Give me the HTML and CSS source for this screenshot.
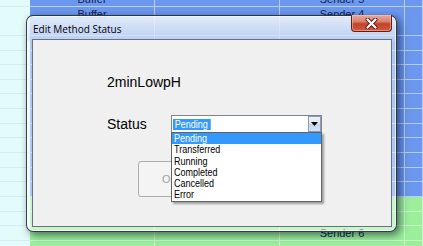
FILE: index.html
```html
<!DOCTYPE html>
<html>
<head>
<meta charset="utf-8">
<link rel="stylesheet" href="styles.css">
</head>
<body>
<div class="sheet">
  <div class="row"><div class="gutter"></div><div class="cell">Buffer</div><div class="cell"></div><div class="cell">Sender 5</div><div class="cell"></div></div>
  <div class="row"><div class="gutter"></div><div class="cell">Buffer</div><div class="cell"></div><div class="cell">Sender 4</div><div class="cell"></div></div>
  <div class="row"><div class="gutter"></div><div class="cell"></div><div class="cell"></div><div class="cell"></div><div class="cell"></div></div>
  <div class="row"><div class="gutter"></div><div class="cell"></div><div class="cell"></div><div class="cell"></div><div class="cell"></div></div>
  <div class="row"><div class="gutter"></div><div class="cell"></div><div class="cell"></div><div class="cell"></div><div class="cell"></div></div>
  <div class="row"><div class="gutter"></div><div class="cell"></div><div class="cell"></div><div class="cell"></div><div class="cell"></div></div>
  <div class="row"><div class="gutter"></div><div class="cell"></div><div class="cell"></div><div class="cell"></div><div class="cell"></div></div>
  <div class="row"><div class="gutter"></div><div class="cell"></div><div class="cell"></div><div class="cell"></div><div class="cell"></div></div>
  <div class="row"><div class="gutter"></div><div class="cell"></div><div class="cell"></div><div class="cell"></div><div class="cell"></div></div>
  <div class="row"><div class="gutter"></div><div class="cell"></div><div class="cell"></div><div class="cell"></div><div class="cell"></div></div>
  <div class="row"><div class="gutter"></div><div class="cell"></div><div class="cell"></div><div class="cell"></div><div class="cell"></div></div>
  <div class="row"><div class="gutter"></div><div class="cell"></div><div class="cell"></div><div class="cell"></div><div class="cell"></div></div>
  <div class="row"><div class="gutter"></div><div class="cell"></div><div class="cell"></div><div class="cell"></div><div class="cell"></div></div>
  <div class="row"><div class="gutter"></div><div class="cell"></div><div class="cell"></div><div class="cell"></div><div class="cell"></div></div>
  <div class="row green"><div class="gutter"></div><div class="cell"></div><div class="cell"></div><div class="cell"></div><div class="cell"></div></div>
  <div class="row green"><div class="gutter"></div><div class="cell"></div><div class="cell"></div><div class="cell"></div><div class="cell"></div></div>
  <div class="row green"><div class="gutter"></div><div class="cell"></div><div class="cell"></div><div class="cell">Sender 6</div><div class="cell"></div></div>
  <div class="row green"><div class="gutter"></div><div class="cell"></div><div class="cell"></div><div class="cell"></div><div class="cell"></div></div>
</div>

<div class="window">
  <div class="titlebar">
    <span class="title">Edit Method Status</span>
    <button class="close" aria-label="Close">
      <svg width="13" height="11" viewBox="0 0 13 11">
        <path d="M2.5 1.5 L10.5 9.5 M10.5 1.5 L2.5 9.5" stroke="#5a1a14" stroke-width="4" stroke-linecap="round"/>
        <path d="M2.5 1.5 L10.5 9.5 M10.5 1.5 L2.5 9.5" stroke="#ffffff" stroke-width="2.2" stroke-linecap="round"/>
      </svg>
    </button>
  </div>
  <div class="client">
    <div class="name">2minLowpH</div>
    <div class="status-row">
      <span class="label">Status</span>
      <div class="combo">
        <div class="combo-field"><span class="combo-sel">Pending</span></div>
        <div class="combo-btn">
          <svg width="7" height="4" viewBox="0 0 7 4"><path d="M0 0 H7 L3.5 4 Z" fill="#000"/></svg>
        </div>
        <ul class="list">
          <li class="selected"><span>Pending</span></li>
          <li><span>Transferred</span></li>
          <li><span>Running</span></li>
          <li><span>Completed</span></li>
          <li><span>Cancelled</span></li>
          <li><span>Error</span></li>
        </ul>
      </div>
    </div>
    <div class="actions">
      <button class="ok" disabled>OK</button>
    </div>
  </div>
</div>
</body>
</html>
```

FILE: styles.css
```css
html, body {
  margin: 0;
  padding: 0;
}
body {
  width: 423px;
  height: 246px;
  overflow: hidden;
  position: relative;
  font-family: "Liberation Sans", Arial, sans-serif;
  background: #e4fafa;
}

/* background spreadsheet */
.sheet {
  margin-top: -8px;
}
.row {
  display: grid;
  grid-template-columns: 30px 125px 125px 125px 1fr;
  height: 14.65px;
}
.gutter {
  background: #e4fbfb;
  border-bottom: 1px solid #d2eeee;
}
.cell {
  background: #6b98ee;
  border-right: 1px solid #b9cdf4;
  border-bottom: 1px solid #b9cdf4;
  color: #14224a;
  font-size: 11px;
  line-height: 14px;
  text-align: center;
}
.row.green .cell {
  background: #9bef9b;
  border-color: #c9f6c9;
}

/* dialog window */
.window {
  position: absolute;
  left: 26px;
  top: 15px;
  width: 371px;
  height: 217px;
  box-sizing: border-box;
  border: 1px solid rgba(20, 30, 40, 0.85);
  border-radius: 7px;
  background:
    linear-gradient(to bottom, rgba(238, 243, 250, 0.9) 0px, rgba(214, 226, 244, 0.75) 24px, rgba(255, 255, 255, 0.45) 25px, rgba(255, 255, 255, 0.45) 100%);
  box-shadow: inset 0 0 0 1px rgba(255, 255, 255, 0.6), 3px 3px 8px rgba(0, 0, 30, 0.55);
  display: flex;
  flex-direction: column;
  padding: 0 4px 4px 5px;
}
.titlebar {
  height: 23px;
  display: flex;
  justify-content: space-between;
  align-items: flex-start;
}
.title {
  font-family: "Open Sans", "Noto Sans", sans-serif;
  font-size: 10px;
  line-height: 12px;
  color: #000;
  padding-top: 7px;
  padding-left: 1px;
}
.close {
  width: 41px;
  height: 17px;
  margin-top: -1px;
  padding: 0;
  border: 1px solid #5e2016;
  border-top: none;
  border-radius: 0 0 4px 4px;
  background: linear-gradient(to bottom, #e9a899 0%, #d9836f 40%, #c1432c 55%, #cf5a3f 100%);
  box-shadow: inset 0 0 0 1px rgba(255, 200, 180, 0.5);
  display: flex;
  align-items: center;
  justify-content: center;
}
.close svg {
  display: block;
}

.client {
  flex: 1;
  background: #f0f0f0;
  border: 1px solid #68727e;
  display: flex;
  flex-direction: column;
  padding-left: 74px;
}
.name {
  margin-top: 34px;
  font-size: 14px;
  line-height: 16px;
  color: #000;
}
.status-row {
  margin-top: 25px;
  display: flex;
  align-items: center;
  height: 18px;
}
.label {
  width: 64px;
  font-size: 14px;
  line-height: 16px;
  color: #000;
}
.combo {
  position: relative;
  width: 151px;
  height: 18px;
  box-sizing: border-box;
  border: 1px solid #7a8590;
  background: #fff;
  display: flex;
  align-items: stretch;
}
.combo-field {
  flex: 1;
  display: flex;
  align-items: center;
  padding-left: 1px;
}
.combo-sel {
  display: inline-block;
  background: #3399ff;
  color: #fff;
  font-size: 11px;
  line-height: 11px;
  padding: 0 4px 0 2px;
  transform: scaleX(0.82);
  transform-origin: left center;
}
.combo-btn {
  width: 13px;
  box-sizing: border-box;
  border: 1px solid #8c9bb0;
  background: linear-gradient(to bottom, #eef3fa 0%, #dbe5f2 50%, #c5d5ea 51%, #d4e1f2 100%);
  display: flex;
  align-items: center;
  justify-content: center;
}
.list {
  position: absolute;
  top: 100%;
  left: -1px;
  width: 151px;
  box-sizing: border-box;
  margin: 0;
  padding: 0;
  list-style: none;
  background: #fff;
  border: 1px solid #646464;
  box-shadow: 2px 2px 2px rgba(0, 0, 0, 0.35);
  font-size: 11px;
  color: #000;
}
.list li {
  height: 11.3px;
  line-height: 11.3px;
  padding-left: 2px;
  white-space: nowrap;
}
.list li span {
  display: inline-block;
  transform: scaleX(0.82);
  transform-origin: left center;
}
.list li.selected {
  background: #3399ff;
  color: #fff;
}

.actions {
  margin-top: 28px;
  padding-left: 31px;
  display: flex;
}
.ok {
  width: 64px;
  height: 36px;
  box-sizing: border-box;
  border: 1px solid #adadad;
  border-radius: 3px;
  background: #f4f4f4;
  color: #a0a0a0;
  font-family: "Liberation Sans", sans-serif;
  font-size: 11px;
  padding: 0;
}
```
